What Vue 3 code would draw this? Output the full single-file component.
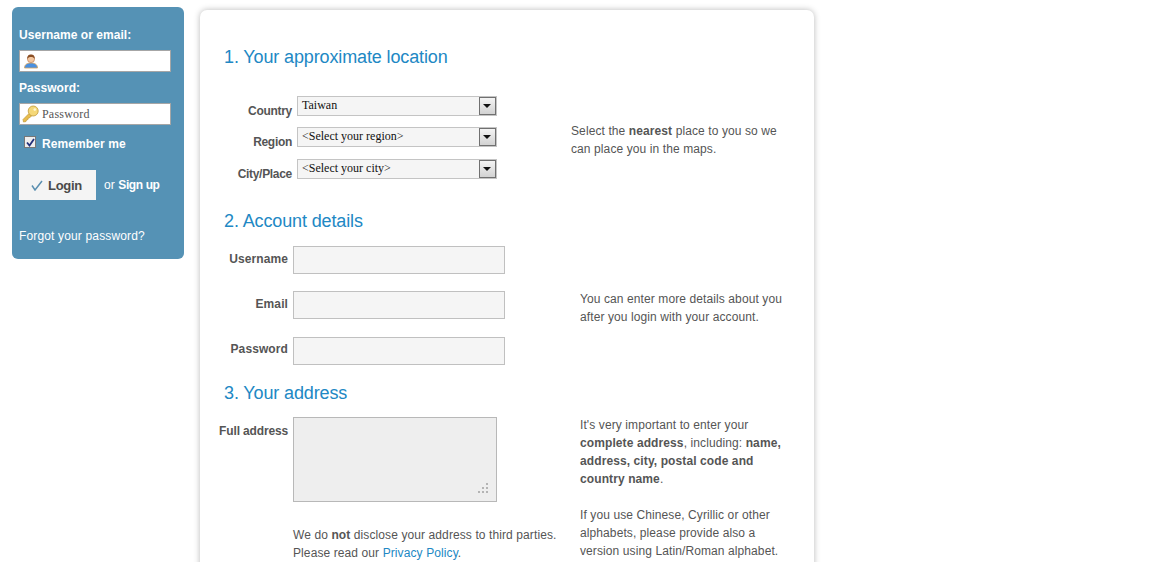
<script setup>
const locations = [
  { label: 'Country', value: 'Taiwan' },
  { label: 'Region', value: '<Select your region>' },
  { label: 'City/Place', value: '<Select your city>' }
]
const accountFields = ['Username', 'Email', 'Password']
</script>

<template>
  <div class="page">
    <aside class="login-box">
      <label class="side-label">Username or email:</label>
      <div class="side-input">
        <svg class="user-icon" width="16" height="16" viewBox="0 0 16 16">
          <path d="M1.5 15c0-3.500 2.500-5 6.500-5s6.500 1.500 6.500 5z" fill="#4a90e0" stroke="#d9a35a" stroke-width=".8" />
          <circle cx="8" cy="6" r="3.600" fill="#f3c7a0" stroke="#b5744a" stroke-width=".6" />
          <path d="M4.300 6C4 2.800 5.800 1.500 8 1.500s4 1.300 3.700 4.500C11 4.500 9.500 4 8 4S5 4.500 4.300 6z" fill="#8a4e24" />
        </svg>
      </div>
      <label class="side-label pass-label">Password:</label>
      <div class="side-input pass-input">
        <svg class="key-icon" width="17" height="18" viewBox="0 0 17 18">
          <path d="M7 8.500 1 14.500l.5 2.500 2.500-.5.500-1.500 1.500-.5.300-1.500 1.500-.3 2-2z" fill="#e8bd4e" stroke="#c09a3a" stroke-width=".7" />
          <circle cx="11.200" cy="6" r="5" fill="#f5d878" stroke="#c09a3a" stroke-width=".8" />
          <circle cx="12.800" cy="4.600" r="1.300" fill="#fff6cf" />
        </svg>
        <span class="placeholder">Password</span>
      </div>
      <div class="remember">
        <span class="check">
          <svg width="9" height="9" viewBox="0 0 9 9"><path d="M1 4.500 3.500 7.500 8 1" fill="none" stroke="#23307a" stroke-width="1.800" /></svg>
        </span>
        <span>Remember me</span>
      </div>
      <div class="login-row">
        <button class="login-btn" type="button">
          <svg width="12" height="11" viewBox="0 0 12 11"><path d="M1 5.500 4 10 11 1" fill="none" stroke="#5a8fb0" stroke-width="1.500" /></svg>
          Login
        </button>
        <span class="or">or <b>Sign up</b></span>
      </div>
      <a class="forgot">Forgot your password?</a>
    </aside>

    <main class="card">
      <h2 class="first-heading">1. Your approximate location</h2>
      <div class="columns location">
        <div class="selects">
          <div v-for="item in locations" :key="item.label" class="select-row">
            <span class="field-label">{{ item.label }}</span>
            <div class="fake-select">
              <span>{{ item.value }}</span>
              <i class="arrow-btn"></i>
            </div>
          </div>
        </div>
        <p class="hint location-hint">Select the <b>nearest</b> place to you so we can place you in the maps.</p>
      </div>

      <h2 class="account-heading">2. Account details</h2>
      <div class="columns">
        <div class="account-fields">
          <div v-for="name in accountFields" :key="name" class="account-row">
            <span class="account-label">{{ name }}</span>
            <div class="text-box"></div>
          </div>
        </div>
        <p class="hint account-hint">You can enter more details about you after you login with your account.</p>
      </div>

      <h2 class="address-heading">3. Your address</h2>
      <div class="columns">
        <div class="address-left">
          <div class="address-row">
            <span class="address-label">Full address</span>
            <div class="area">
              <svg class="grip" width="11" height="10" viewBox="0 0 11 10" fill="#b4b4b4">
                <rect x="8" y="0" width="2" height="2" /><rect x="4" y="4" width="2" height="2" /><rect x="8" y="4" width="2" height="2" />
                <rect x="0" y="8" width="2" height="2" /><rect x="4" y="8" width="2" height="2" /><rect x="8" y="8" width="2" height="2" />
              </svg>
            </div>
          </div>
          <p class="privacy">We do <b>not</b> disclose your address to third parties.<br />Please read our <a>Privacy Policy</a>.</p>
        </div>
        <div class="hint address-hint">
          <p>It's very important to enter your <b>complete address</b>, including: <b>name, address, city, postal code and country name</b>.</p>
          <p>If you use Chinese, Cyrillic or other alphabets, please provide also a version using Latin/Roman alphabet.</p>
        </div>
      </div>
    </main>
  </div>
</template>

<style>
html, body { overflow: hidden; background: #fff; }
</style>

<style scoped>
.page {
  display: flex;
  align-items: flex-start;
  gap: 16px;
  height: 562px;
  overflow: hidden;
  padding-left: 12px;
  font-family: "Liberation Sans", Arial, sans-serif;
  font-size: 12px;
  letter-spacing: 0.1px;
  color: #555;
}

.login-box {
  flex: none;
  box-sizing: border-box;
  width: 172px;
  height: 252px;
  margin-top: 7px;
  padding: 20px 7px 0;
  border-radius: 6px;
  background: #5592b5;
  color: #fff;
}

.side-label {
  display: block;
  height: 16px;
  font-weight: bold;
  letter-spacing: 0.05px;
  line-height: 17px;
}

.pass-label { margin-top: 8px; margin-bottom: 7px; }

.side-input {
  box-sizing: border-box;
  display: flex;
  align-items: center;
  gap: 3px;
  width: 152px;
  height: 22px;
  margin-top: 7px;
  padding-left: 3px;
  border: 1px solid #a6a6a6;
  background: #fff;
}

.pass-input { margin-top: 0; padding-left: 2px; }

.placeholder {
  font-family: "Liberation Serif", serif;
  font-size: 12px;
  letter-spacing: 0.2px;
  color: #555;
}

.remember {
  display: flex;
  align-items: center;
  gap: 6px;
  height: 16px;
  margin-top: 11px;
  padding-left: 5px;
  font-weight: bold;
}

.check {
  box-sizing: border-box;
  display: flex;
  align-items: center;
  justify-content: center;
  width: 12px;
  height: 12px;
  margin-top: -4px;
  border: 1px solid #777;
  background: #eee;
}

.login-row {
  display: flex;
  align-items: center;
  gap: 8px;
  margin-top: 18px;
}

.login-btn {
  display: flex;
  align-items: center;
  justify-content: center;
  gap: 5px;
  box-sizing: border-box;
  width: 77px;
  height: 30px;
  padding: 0 2px 0 0;
  border: 0;
  background: #f4f4f4;
  color: #4a4a4a;
  font: bold 13px "Liberation Sans", Arial, sans-serif;
  letter-spacing: -0.3px;
}

.or { margin-top: -1px; }
.or b { letter-spacing: -0.4px; }

.forgot {
  display: block;
  margin-top: 29px;
  letter-spacing: 0.15px;
  line-height: 15px;
}

.card {
  box-sizing: border-box;
  flex: none;
  width: 614px;
  height: 700px;
  margin-top: 10px;
  padding-left: 24px;
  border-radius: 7px;
  background: #fff;
  box-shadow: 0 0 6px rgba(0, 0, 0, 0.28);
}

h2 {
  margin: 0;
  font-size: 18px;
  font-weight: normal;
  line-height: 22px;
  letter-spacing: -0.13px;
  color: #2188c4;
}

.first-heading { margin-top: 36px; }
.account-heading { margin-top: 31px; }
.address-heading { margin-top: 17px; }

.columns { display: flex; }

.location { margin-top: 28px; }

.selects {
  display: flex;
  flex-direction: column;
  gap: 11px;
  width: 347px;
}

.select-row {
  display: flex;
  align-items: flex-start;
  height: 20px;
}

.select-row:last-child { margin-top: 1px; }

.field-label {
  width: 68px;
  padding-top: 8px;
  text-align: right;
  font-weight: bold;
  letter-spacing: -0.3px;
  line-height: 14px;
}

.fake-select {
  box-sizing: border-box;
  display: flex;
  align-items: center;
  justify-content: space-between;
  width: 200px;
  height: 20px;
  margin-left: 5px;
  padding: 0 0 0 4px;
  border: 1px solid #c4c4c4;
  background: #f5f5f5;
  font-family: "Liberation Serif", serif;
  font-size: 12px;
  letter-spacing: 0;
  line-height: 16px;
  color: #111;
}

.fake-select span { margin-top: -2px; }

.arrow-btn {
  position: relative;
  box-sizing: border-box;
  width: 17px;
  height: 18px;
  border: 1px solid #707070;
  background: linear-gradient(#f4f4f4, #d2d2d2);
}

.arrow-btn::after {
  content: "";
  position: absolute;
  left: 3px;
  top: 6px;
  border: 4px solid transparent;
  border-top: 4px solid #111;
  border-bottom: 0;
}

.hint {
  margin: 0;
  line-height: 18px;
}

.location-hint { width: 215px; margin-top: 26px; }

.account-fields {
  display: flex;
  flex-direction: column;
  gap: 17px;
  margin-top: 14px;
  width: 356px;
}

.account-row {
  display: flex;
  align-items: flex-start;
  height: 28px;
}

.account-row:last-child { margin-top: 1px; }

.account-label {
  width: 64px;
  padding-top: 6px;
  padding-right: 5px;
  text-align: right;
  font-weight: bold;
  line-height: 15px;
}

.account-row:last-child .account-label { padding-top: 5px; }

.text-box {
  box-sizing: border-box;
  width: 212px;
  height: 28px;
  border: 1px solid #c0c0c0;
  background: #f5f5f5;
}

.account-hint { width: 210px; margin-top: 58px; }

.address-row {
  display: flex;
  align-items: flex-start;
  margin-top: 13px;
}

.address-left { width: 356px; }

.address-label {
  flex: none;
  width: 69px;
  margin-left: -5px;
  padding-top: 7px;
  padding-right: 5px;
  text-align: right;
  font-weight: bold;
  letter-spacing: -0.15px;
  line-height: 15px;
  white-space: nowrap;
}

.area {
  position: relative;
  box-sizing: border-box;
  width: 204px;
  height: 85px;
  border: 1px solid #b8b8b8;
  background: #eee;
}

.grip {
  position: absolute;
  right: 7px;
  bottom: 8px;
}

.privacy {
  margin: 24px 0 0 69px;
  line-height: 18px;
  white-space: nowrap;
}

.privacy a { color: #2188c4; }

.address-hint {
  width: 210px;
  margin-top: 12px;
}

.address-hint p { margin: 0 0 18px; }
</style>
